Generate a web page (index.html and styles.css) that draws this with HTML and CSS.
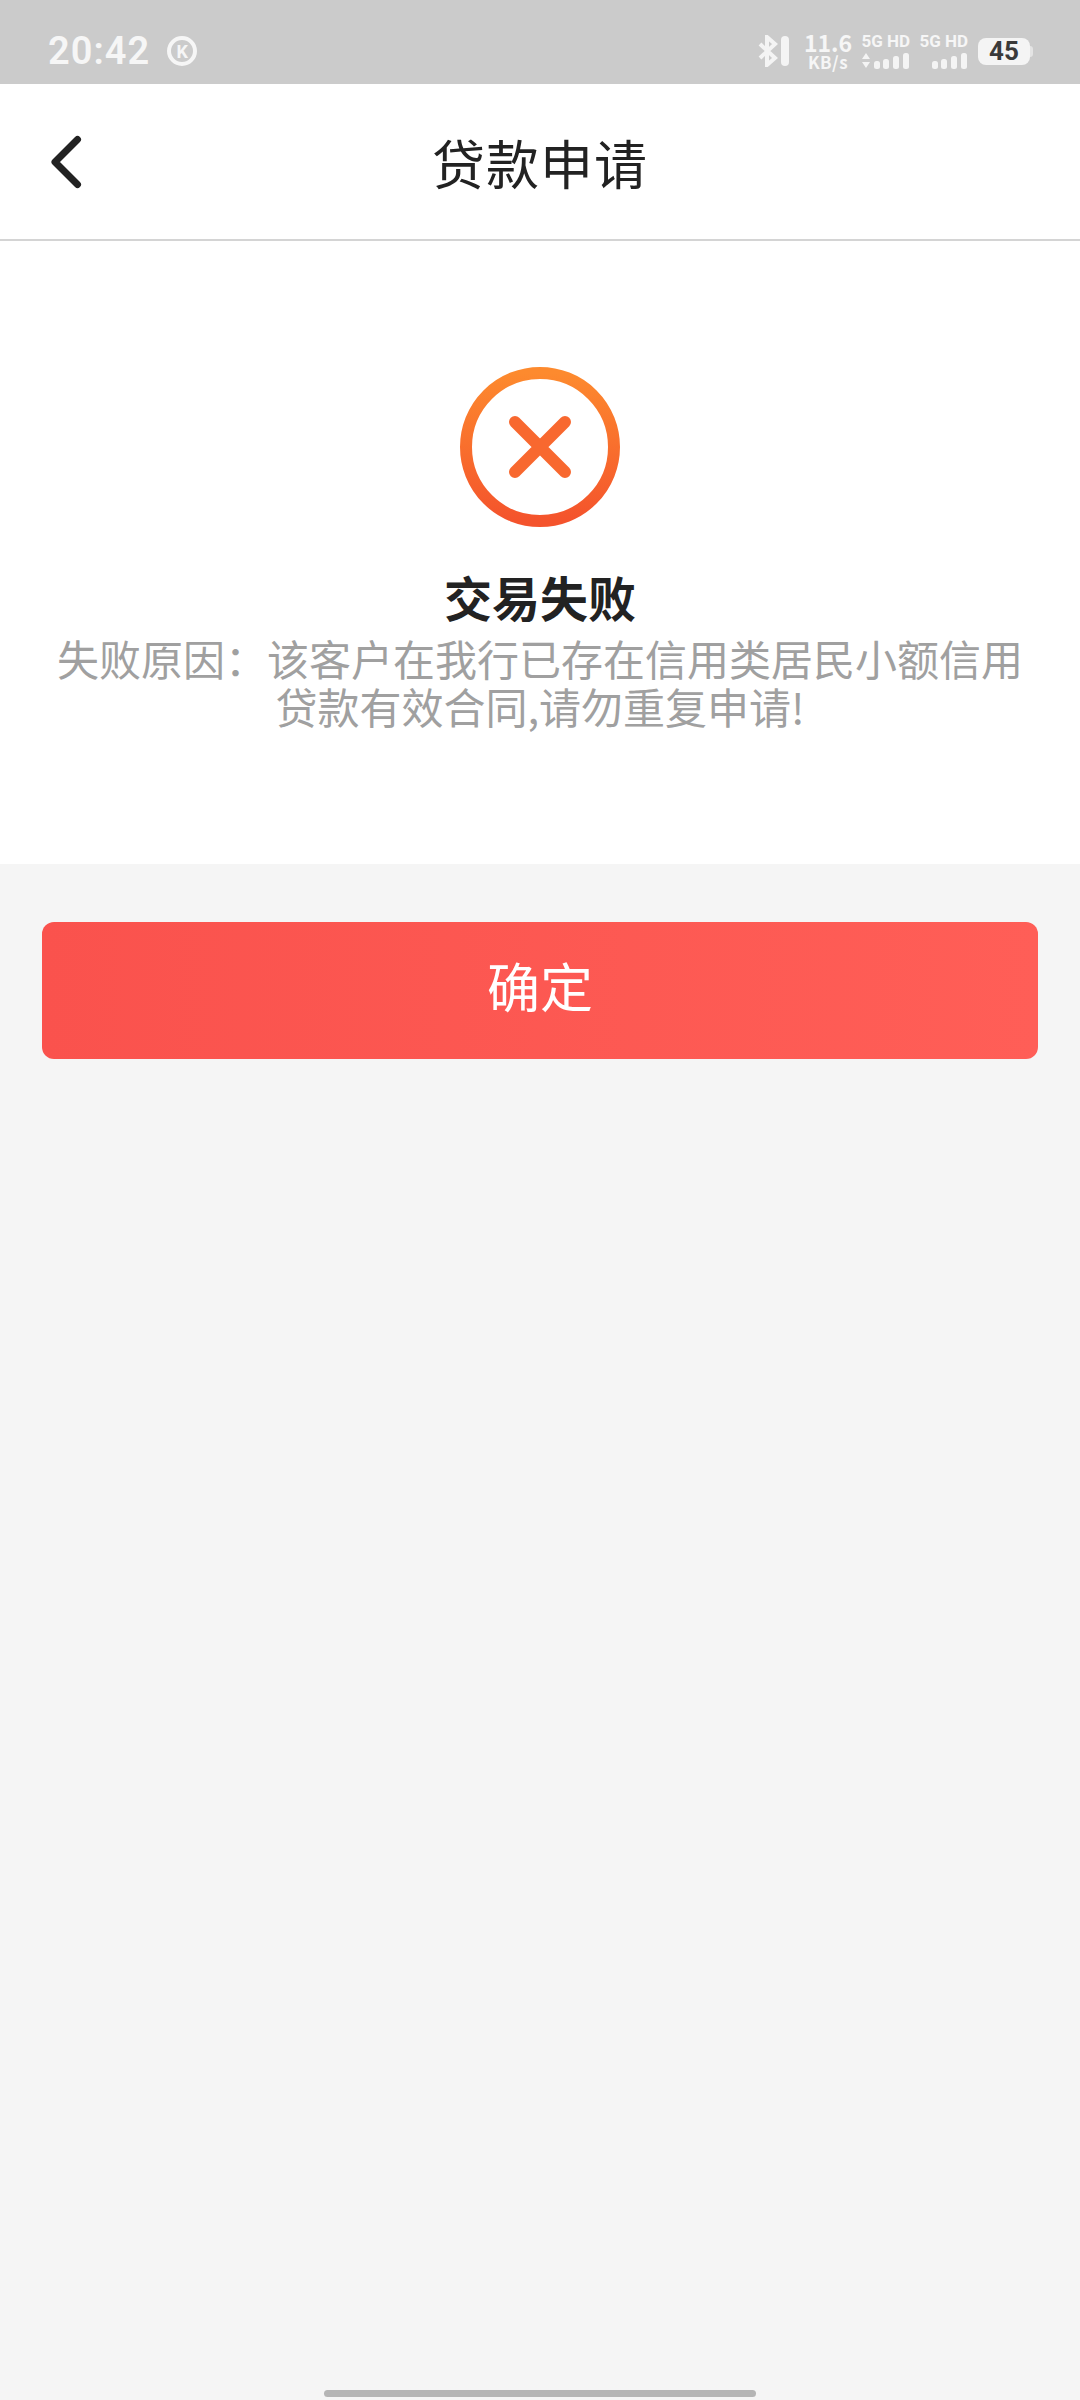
FILE: index.html
```html
<!DOCTYPE html>
<html lang="zh">

<head>
    <meta charset="utf-8">
    <title>贷款申请</title>
    <link rel="stylesheet" href="styles.css">
</head>

<body>
    <div class="page">
        <div class="status-bar">
            <div class="status-left">
                <span class="time">20:42</span>
                <span class="k-badge">K</span>
            </div>
            <div class="status-right">
                <svg class="bt-icon" width="32" height="32" viewBox="0 0 32 32">
                    <path d="M2 9 L17 23 L9 30 V2 L17 9 L2 23" fill="none" stroke="#f4f4f4" stroke-width="4" />
                    <rect x="23" y="1" width="8" height="30" rx="4" fill="#f4f4f4" />
                </svg>
                <div class="speed">
                    <span class="speed-num">11.6</span>
                    <span class="speed-unit">KB/s</span>
                </div>
                <div class="signal">
                    <span class="signal-label">5G HD</span>
                    <svg width="48" height="17" viewBox="0 0 48 17">
                        <path d="M0 7 L4 1 L8 7 Z M0 10 L8 10 L4 16 Z" fill="#f4f4f4" />
                        <rect x="12" y="9" width="6" height="8" rx="2.5" fill="#f4f4f4" />
                        <rect x="21" y="7" width="6" height="10" rx="2.5" fill="#f4f4f4" />
                        <rect x="31" y="4" width="6" height="13" rx="2.5" fill="#f4f4f4" />
                        <rect x="41" y="1" width="6" height="16" rx="2.5" fill="#f4f4f4" />
                    </svg>
                </div>
                <div class="signal">
                    <span class="signal-label">5G HD</span>
                    <svg width="48" height="17" viewBox="0 0 48 17">
                        <rect x="12" y="9" width="6" height="8" rx="2.5" fill="#f4f4f4" />
                        <rect x="21" y="7" width="6" height="10" rx="2.5" fill="#f4f4f4" />
                        <rect x="31" y="4" width="6" height="13" rx="2.5" fill="#f4f4f4" />
                        <rect x="41" y="1" width="6" height="16" rx="2.5" fill="#f4f4f4" />
                    </svg>
                </div>
                <div class="battery">
                    <span class="battery-level">45</span>
                    <span class="battery-cap"></span>
                </div>
            </div>
        </div>

        <div class="nav-bar">
            <svg class="back-icon" width="36" height="56" viewBox="0 0 36 56">
                <path d="M28.5 5.5 L6 28 L28.5 50.5" fill="none" stroke="#222" stroke-width="7" stroke-linecap="round" stroke-linejoin="round" />
            </svg>
            <h1 class="nav-title">贷款申请</h1>
        </div>

        <div class="result-box">
            <svg class="result-icon" width="164" height="164" viewBox="0 0 164 164">
                <defs>
                    <linearGradient id="failGrad" x1="0" y1="0" x2="0" y2="1">
                        <stop offset="0" stop-color="#fd8a2e" />
                        <stop offset="1" stop-color="#f4532c" />
                    </linearGradient>
                </defs>
                <circle cx="82" cy="82" r="74" fill="none" stroke="url(#failGrad)" stroke-width="12" />
                <path d="M57 57 L107 107 M107 57 L57 107" fill="none" stroke="#f8682f" stroke-width="12" stroke-linecap="round" />
            </svg>
            <h2 class="result-title">交易失败</h2>
            <p class="result-msg">失败原因：该客户在我行已存在信用类居民小额信用贷款有效合同,请勿重复申请!</p>
        </div>

        <div class="actions">
            <button class="confirm-btn">确定</button>
        </div>

        <div class="home-bar"></div>
    </div>
</body>

</html>
```

FILE: styles.css
```css
* {
    box-sizing: border-box;
    font-family: "Noto Sans CJK SC", "Roboto", sans-serif;
}

html,
body {
    margin: 0;
    padding: 0;
}

.page {
    width: 1080px;
    height: 2400px;
    display: flex;
    flex-direction: column;
    background-color: #f5f5f5;
}

.status-bar {
    height: 84px;
    padding: 18px 47px 0 48px;
    display: flex;
    justify-content: space-between;
    align-items: center;
    background-color: #cbcbcb;
    color: #f6f6f6;
}

.status-left {
    display: flex;
    align-items: center;
    gap: 17px;
}

.time {
    font-family: "Roboto", sans-serif;
    font-size: 38px;
    font-weight: 600;
    letter-spacing: 1px;
}

.k-badge {
    width: 30px;
    height: 30px;
    border: 4px solid #f6f6f6;
    border-radius: 50%;
    display: flex;
    justify-content: center;
    align-items: center;
    font-family: "Roboto", sans-serif;
    font-size: 18px;
    font-weight: 700;
}

.status-right {
    display: flex;
    align-items: center;
    gap: 10px;
}

.speed {
    width: 44px;
    margin: 0 2px 0 6px;
    display: flex;
    flex-direction: column;
    align-items: center;
    font-family: "Roboto", sans-serif;
    font-weight: 700;
}

.speed-num {
    font-size: 23px;
    line-height: 22px;
}

.speed-unit {
    font-size: 17px;
    line-height: 18px;
    letter-spacing: 0.5px;
}

.signal {
    width: 48px;
    display: flex;
    flex-direction: column;
    align-items: flex-end;
    gap: 3px;
}

.signal-label {
    font-family: "Roboto", sans-serif;
    font-size: 17px;
    line-height: 15px;
    font-weight: 700;
    white-space: nowrap;
}

.battery {
    position: relative;
    width: 52px;
    height: 27px;
    margin-right: 3px;
    border-radius: 8px;
    background-color: #f4f4f4;
    display: flex;
    justify-content: center;
    align-items: center;
}

.battery-level {
    font-family: "Roboto", sans-serif;
    font-size: 26px;
    font-weight: 700;
    color: #3a3a3a;
}

.battery-cap {
    position: absolute;
    right: -3px;
    top: 8px;
    width: 3px;
    height: 11px;
    border-radius: 0 3px 3px 0;
    background-color: #e4e4e4;
}

.nav-bar {
    position: relative;
    height: 157px;
    display: flex;
    justify-content: center;
    align-items: center;
    background-color: #fff;
    border-bottom: 2px solid #d4d4d4;
}

.back-icon {
    position: absolute;
    left: 49px;
    top: 50px;
}

.nav-title {
    margin: 0;
    font-size: 53px;
    font-weight: 400;
    letter-spacing: 1px;
    color: #222;
}

.result-box {
    height: 623px;
    padding-top: 124px;
    display: flex;
    flex-direction: column;
    align-items: center;
    background-color: #fff;
}

.result-title {
    margin: 43px 0 0;
    font-size: 48px;
    line-height: 48px;
    font-weight: 700;
    color: #222;
}

.result-msg {
    margin: 14px 0 0;
    padding: 0 54px;
    font-size: 42px;
    line-height: 48px;
    text-align: center;
    color: #a0a0a0;
}

.actions {
    padding: 58px 42px 0;
}

.confirm-btn {
    width: 100%;
    height: 137px;
    padding-bottom: 12px;
    border: none;
    border-radius: 12px;
    background: linear-gradient(90deg, #fa524d, #ff5e57);
    color: #fff;
    font-size: 53px;
}

.home-bar {
    width: 432px;
    height: 7px;
    margin: auto auto 3px;
    border-radius: 4px;
    background-color: #b5b5b5;
}
```
